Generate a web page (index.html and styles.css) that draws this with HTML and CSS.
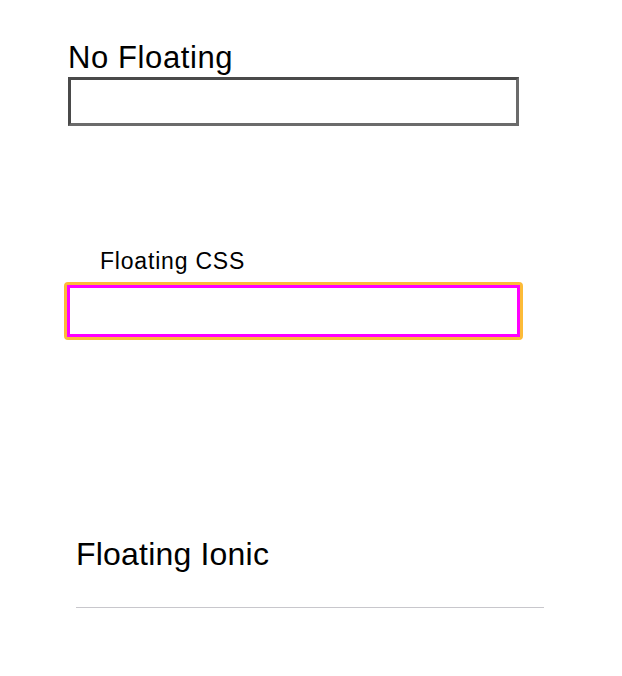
FILE: index.html
```html
<!DOCTYPE html>
<html lang="en">
<head>
<meta charset="utf-8">
<title>Floating labels</title>
<link rel="stylesheet" href="styles.css">
</head>
<body>
<main class="page">
  <section class="field field-plain">
    <label class="label-plain" for="f1">No Floating</label>
    <input class="input-plain" id="f1" type="text">
  </section>
  <section class="field field-css">
    <label class="label-css" for="f2">Floating CSS</label>
    <div class="focus-ring">
      <input class="input-css" id="f2" type="text">
    </div>
  </section>
  <section class="field field-ionic">
    <div class="ion-item">
      <label class="label-ionic" for="f3">Floating Ionic</label>
      <input class="input-ionic" id="f3" type="text">
    </div>
  </section>
</main>
</body>
</html>
```

FILE: styles.css
```css
html, body {
  margin: 0;
  padding: 0;
  background: #ffffff;
}

body {
  font-family: "Liberation Sans", Arial, sans-serif;
  color: #000000;
}

.page {
  padding-left: 68px;
  padding-top: 40px;
}

.field {
  display: flex;
  flex-direction: column;
  align-items: flex-start;
}

.label-plain {
  font-size: 31px;
  line-height: 36px;
  letter-spacing: 0.6px;
}

.input-plain {
  box-sizing: border-box;
  margin: 1px 0 0 0;
  width: 451px;
  height: 49px;
  border-style: solid;
  border-width: 3px;
  border-color: #4a4a4a #6b6b6b #6b6b6b #4a4a4a;
  background: #ffffff;
  padding: 0 6px;
  font: inherit;
  outline: none;
}

.field-css {
  margin-top: 122px;
}

.label-css {
  font-size: 23px;
  line-height: 27px;
  letter-spacing: 0.8px;
  margin-left: 32px;
}

.focus-ring {
  margin-top: 7px;
  margin-left: -4px;
  border: 3px solid #fcbb38;
  border-radius: 4px;
  display: flex;
}

.input-css {
  box-sizing: border-box;
  margin: 0;
  width: 453px;
  height: 52px;
  border: 3px solid #ff00ff;
  background: #ffffff;
  padding: 0 6px;
  font: inherit;
  outline: none;
}

.field-ionic {
  margin-top: 195px;
}

.ion-item {
  margin-left: 8px;
  width: 468px;
  border-bottom: 1px solid #c8c7cc;
  display: flex;
  flex-direction: column;
}

.label-ionic {
  font-size: 32px;
  line-height: 38px;
  letter-spacing: 0.2px;
}

.input-ionic {
  box-sizing: border-box;
  margin: 0;
  width: 100%;
  height: 34px;
  border: 0;
  padding: 0;
  background: transparent;
  font: inherit;
  outline: none;
}
```
